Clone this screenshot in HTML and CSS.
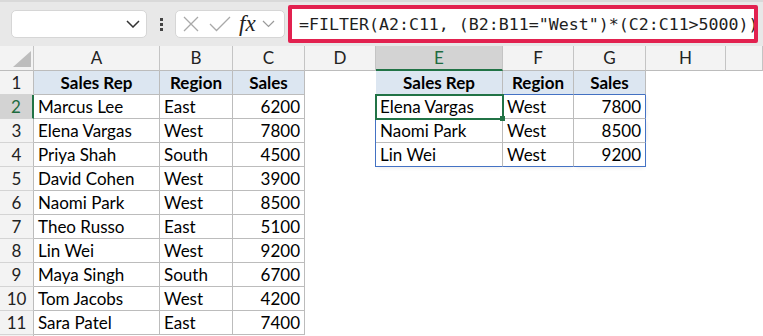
FILE: index.html
```html
<!DOCTYPE html>
<html lang="en">

<head>
  <meta charset="UTF-8">
  <meta name="viewport" content="width=device-width, initial-scale=1.0">
  <title>FILTER example</title>
  <link rel="stylesheet" href="styles.css">
</head>

<body>
  <div class="toolbar">
    <div class="namebox">
      <svg class="chev" width="14" height="8" viewBox="0 0 14 8"><path d="M1 1 L7 7 L13 1" fill="none" stroke="#333" stroke-width="1.5"/></svg>
    </div>
    <div class="dots">
      <span></span><span></span><span></span>
    </div>
    <div class="fxbox">
      <svg class="icon-x" width="16" height="16" viewBox="0 0 16 16"><path d="M1 1 L15 15 M15 1 L1 15" fill="none" stroke="#a9a9a9" stroke-width="1.3"/></svg>
      <svg class="icon-ok" width="22" height="16" viewBox="0 0 22 16"><path d="M1 8 L7.5 14.5 L21 1" fill="none" stroke="#a9a9a9" stroke-width="1.3"/></svg>
      <span class="fx">fx</span>
      <svg class="chev-small" width="13" height="8" viewBox="0 0 13 8"><path d="M1 1 L6.5 6.5 L12 1" fill="none" stroke="#9a9a9a" stroke-width="1.2"/></svg>
    </div>
    <div class="formula">=FILTER(A2:C11, (B2:B11="West")*(C2:C11&gt;5000))</div>
  </div>

  <div class="sheet">
    <div class="row colhead">
      <div class="corner">
        <svg width="18" height="16" viewBox="0 0 18 16"><polygon points="0,16 18,16 18,0" fill="#bdbdbd"/></svg>
      </div>
      <div class="ch">A</div>
      <div class="ch">B</div>
      <div class="ch">C</div>
      <div class="ch">D</div>
      <div class="ch sel">E</div>
      <div class="ch">F</div>
      <div class="ch">G</div>
      <div class="ch">H</div>
      <div class="ch"></div>
    </div>

    <div class="row">
      <div class="rh">1</div>
      <div class="t th">Sales Rep</div>
      <div class="t th">Region</div>
      <div class="t th">Sales</div>
      <div class="c"></div>
      <div class="t th spill-top">Sales Rep</div>
      <div class="t th spill-top">Region</div>
      <div class="t th spill-top">Sales</div>
      <div class="c"></div>
      <div class="c"></div>
    </div>

    <div class="row">
      <div class="rh sel">2</div>
      <div class="t">Marcus Lee</div>
      <div class="t">East</div>
      <div class="t num">6200</div>
      <div class="c spill-left"></div>
      <div class="t active">Elena Vargas</div>
      <div class="t">West</div>
      <div class="t num spill-right">7800</div>
      <div class="c"></div>
      <div class="c"></div>
    </div>

    <div class="row">
      <div class="rh">3</div>
      <div class="t">Elena Vargas</div>
      <div class="t">West</div>
      <div class="t num">7800</div>
      <div class="c spill-left"></div>
      <div class="t">Naomi Park</div>
      <div class="t">West</div>
      <div class="t num spill-right">8500</div>
      <div class="c"></div>
      <div class="c"></div>
    </div>

    <div class="row">
      <div class="rh">4</div>
      <div class="t">Priya Shah</div>
      <div class="t">South</div>
      <div class="t num">4500</div>
      <div class="c spill-left"></div>
      <div class="t spill-bottom">Lin Wei</div>
      <div class="t spill-bottom">West</div>
      <div class="t num spill-right spill-bottom">9200</div>
      <div class="c"></div>
      <div class="c"></div>
    </div>

    <div class="row">
      <div class="rh">5</div>
      <div class="t">David Cohen</div>
      <div class="t">West</div>
      <div class="t num">3900</div>
    </div>

    <div class="row">
      <div class="rh">6</div>
      <div class="t">Naomi Park</div>
      <div class="t">West</div>
      <div class="t num">8500</div>
    </div>

    <div class="row">
      <div class="rh">7</div>
      <div class="t">Theo Russo</div>
      <div class="t">East</div>
      <div class="t num">5100</div>
    </div>

    <div class="row">
      <div class="rh">8</div>
      <div class="t">Lin Wei</div>
      <div class="t">West</div>
      <div class="t num">9200</div>
    </div>

    <div class="row">
      <div class="rh">9</div>
      <div class="t">Maya Singh</div>
      <div class="t">South</div>
      <div class="t num">6700</div>
    </div>

    <div class="row">
      <div class="rh">10</div>
      <div class="t">Tom Jacobs</div>
      <div class="t">West</div>
      <div class="t num">4200</div>
    </div>

    <div class="row">
      <div class="rh">11</div>
      <div class="t">Sara Patel</div>
      <div class="t">East</div>
      <div class="t num">7400</div>
    </div>

    <div class="row last">
      <div class="rh"></div>
    </div>
  </div>
</body>

</html>
```

FILE: styles.css
```css
body {
  margin: 0;
  padding: 0;
  background-color: #fff;
  font-family: Lato, "Open Sans", sans-serif;
  overflow: hidden;
}

/* formula bar strip */
.toolbar {
  height: 46px;
  box-sizing: border-box;
  border-top: 2px solid #d9d9d9;
  background-color: #e8e8e8;
  display: flex;
  align-items: center;
  padding-left: 11px;
}

.namebox {
  width: 136px;
  height: 28px;
  box-sizing: border-box;
  background-color: #fff;
  border: 1px solid #d6d6d6;
  border-radius: 5px;
  display: flex;
  align-items: center;
  justify-content: flex-end;
  padding-right: 6px;
}

.dots {
  width: 28px;
  display: flex;
  flex-direction: column;
  align-items: center;
  gap: 2px;
}

.dots span {
  width: 3px;
  height: 3px;
  background-color: #444;
}

.fxbox {
  width: 110px;
  height: 28px;
  box-sizing: border-box;
  background-color: #fff;
  border: 1px solid #d6d6d6;
  border-radius: 5px;
  display: flex;
  align-items: center;
  padding-left: 7px;
}

.icon-ok {
  margin-left: 10px;
}

.fx {
  margin-left: 8px;
  font-family: "Liberation Serif", serif;
  font-style: italic;
  font-size: 23px;
  color: #222;
  line-height: 22px;
}

.chev-small {
  margin-left: 6px;
}

.formula {
  margin-left: 3px;
  width: 470px;
  height: 38px;
  box-sizing: border-box;
  border: 4px solid #e2214f;
  border-radius: 2px;
  background-color: #fff;
  padding: 2px 0 0 7px;
  font-family: "DejaVu Sans Mono", "Liberation Mono", monospace;
  font-size: 16.6px;
  line-height: 28px;
  color: #1e1e1e;
  white-space: nowrap;
  overflow: hidden;
}

/* sheet grid */
.row {
  display: grid;
  grid-template-columns: 34px 126px 73px 72px 71px 127px 71px 72px 80px 1fr;
  height: 24px;
  font-size: 17px;
  color: #000;
}

.row > div {
  box-sizing: border-box;
  height: 24px;
  line-height: 24px;
  white-space: nowrap;
  overflow: hidden;
}

.colhead {
  height: 25px;
  background-color: #f3f3f3;
}

.colhead > div {
  height: 25px;
  line-height: 24px;
}

.corner {
  border-right: 1px solid #c4c4c4;
  border-bottom: 1px solid #bcbcbc;
  display: flex;
  align-items: flex-end;
  justify-content: flex-end;
  padding: 0 2px 3px 0;
}

.ch {
  text-align: center;
  color: #222;
  border-right: 1px solid #c4c4c4;
  border-bottom: 1px solid #bcbcbc;
}

.ch.sel {
  background-color: #d3d3d3;
  color: #1e6b3f;
  border-bottom: 2px solid #217346;
}

.rh {
  background-color: #f3f3f3;
  text-align: center;
  color: #222;
  border-right: 1px solid #bcbcbc;
  border-bottom: 1px solid #d4d4d4;
}

.rh.sel {
  background-color: #d3d3d3;
  color: #1e6b3f;
  border-right: 2px solid #217346;
}

.t {
  border-right: 1px solid #bcbcbc;
  border-bottom: 1px solid #bcbcbc;
  padding: 0 4px;
}

.th {
  background-color: #dce6f1;
  font-weight: bold;
  text-align: center;
}

.num {
  text-align: right;
}

/* spill range outline */
.spill-top {
  border-bottom-color: #4472c4;
}

.spill-left {
  border-right: 1px solid #4472c4;
}

.spill-right {
  border-right-color: #4472c4;
  box-shadow: 3px 0 4px -2px rgba(0, 0, 0, 0.08);
}

.spill-bottom {
  border-bottom-color: #4472c4;
  box-shadow: 0 3px 4px -2px rgba(0, 0, 0, 0.08);
}

/* active cell */
.row > .active {
  position: relative;
  overflow: visible;
  outline: 2px solid #217346;
  outline-offset: -1px;
  z-index: 2;
}

.active::after {
  content: "";
  position: absolute;
  right: -3px;
  bottom: -3px;
  width: 5px;
  height: 5px;
  background-color: #217346;
}
```
